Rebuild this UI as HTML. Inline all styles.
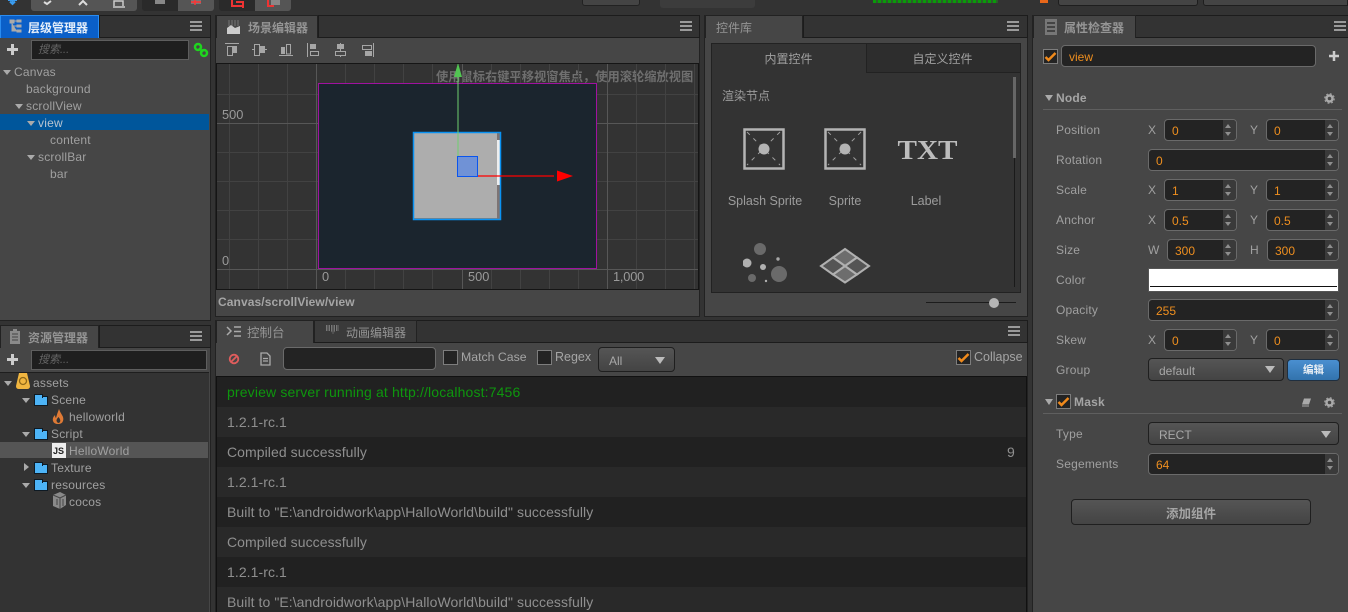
<!DOCTYPE html>
<html><head><meta charset="utf-8">
<style>
html,body{margin:0;padding:0;width:1348px;height:612px;overflow:hidden;background:#333;}
body{position:relative;font-family:"Liberation Sans","Noto Sans CJK SC",sans-serif;font-size:12px;color:#a0a0a0;}
div,span,svg{position:absolute;box-sizing:border-box;}
.panel{background:#464646;border:1px solid #222;}
.tabbar{background:#333;border:1px solid #1c1c1c;}
.tab{background:#464646;border:1px solid #222;border-bottom:0;height:23px;color:#959595;font-size:12px;font-weight:bold;line-height:24px;white-space:nowrap;}
.t{white-space:nowrap;line-height:17px;height:17px;letter-spacing:.2px;margin-top:1px;}
.menu{width:12px;height:10px;border-top:2px solid #9a9a9a;border-bottom:2px solid #9a9a9a;}
.menu:after{content:"";position:absolute;left:0;right:0;top:2px;height:2px;background:#9a9a9a;}
.plus{width:13px;height:13px;}
.search{background:#1f1f1f;border:1px solid #5e5e5e;color:#666;font-style:italic;font-size:11px;line-height:18px;padding-left:6px;white-space:nowrap;}
.arr{width:0;height:0;border-left:4px solid transparent;border-right:4px solid transparent;border-top:5px solid #aaa;}
.folder{width:14px;height:10px;background:#4db4f7;border:1px solid #0e1a24;}
.folder:before{content:"";position:absolute;left:-1px;top:-3px;width:7px;height:3px;background:#4db4f7;border:1px solid #0e1a24;border-bottom:0;}
.lab{color:#a0a0a0;font-size:12px;line-height:16px;height:16px;white-space:nowrap;letter-spacing:.2px;margin-top:1px;}
.num{height:22px;background:#232323;border:1px solid #6a6a6a;border-radius:4px;color:#ef8f1f;font-size:12px;line-height:23px;padding-left:7px;overflow:hidden;}
.num b{position:absolute;right:0;top:0;bottom:0;width:13px;background:#3a3a3a;border-left:1px solid #222;}
.num b:before{content:"";position:absolute;left:2px;top:4px;border-left:3.5px solid transparent;border-right:3.5px solid transparent;border-bottom:4px solid #8e8e8e;}
.num b:after{content:"";position:absolute;left:2px;bottom:4px;border-left:3.5px solid transparent;border-right:3.5px solid transparent;border-top:4px solid #8e8e8e;}
.sel{height:23px;background:linear-gradient(#555,#444);border:1px solid #1f1f1f;border-radius:4px;color:#a8a8a8;font-size:12px;line-height:24px;padding-left:10px;}
.sel i{position:absolute;right:6px;top:7px;border-left:5px solid transparent;border-right:5px solid transparent;border-top:7px solid #bbb;}
.chk{width:15px;height:15px;background:#232323;border:1px solid #7d7d7d;}
.row{left:2px;width:809px;height:30px;line-height:30px;padding-left:10px;font-size:14px;letter-spacing:.07px;color:#8f8f8f;white-space:nowrap;}
.grp{color:#a5a5a5;font-weight:bold;font-size:12px;}
.cap{color:#9c9c9c;font-size:12.5px;text-align:center;white-space:nowrap;line-height:16px;}
</style></head>
<body>
<!-- top strip -->
<div style="left:31px;top:0;width:106px;height:11px;background:#555;border-radius:0 0 3px 3px"></div>
<div style="left:142px;top:0;width:36px;height:11px;background:#2a2a2a;border-radius:0 0 0 3px"></div>
<div style="left:178px;top:0;width:36px;height:11px;background:#555;border-radius:0 0 3px 0"></div>
<div style="left:219px;top:0;width:36px;height:11px;background:#2a2a2a;border-radius:0 0 0 3px"></div>
<div style="left:255px;top:0;width:36px;height:11px;background:#555;border-radius:0 0 3px 0"></div>
<svg style="left:0;top:0" width="300" height="11">
<path d="M8 0h9M12.500 0v4M10 1.500l2.500 2.500 2.500-2.500" stroke="#3a9cf0" stroke-width="2" fill="none"/>
<path d="M44 2l3 2 4-3" stroke="#ddd" stroke-width="2" fill="none"/>
<path d="M79 5l4-4 4 4" stroke="#ddd" stroke-width="2" fill="none"/>
<path d="M114 6V1h9v5M113 7h12" stroke="#ccc" stroke-width="1.500" fill="none"/>
<path d="M155 0h10v4h-10z" fill="#888"/>
<path d="M191 0h10v4h-10z" fill="#777"/><path d="M195 0v5M191 2h10" stroke="#f33" stroke-width="1.500"/>
<path d="M232 0v6h10M236 2h7v6" stroke="#e33" stroke-width="2" fill="none"/>
<path d="M268 0v6h6" stroke="#e33" stroke-width="2" fill="none"/><path d="M271 0h9v5h-9z" fill="#888"/>
</svg>
<div style="left:582px;top:0;width:58px;height:6px;background:#444;border:1px solid #222;border-top:0;border-radius:0 0 3px 3px"></div>
<div style="left:660px;top:0;width:95px;height:8px;background:#3c3c3c;border-radius:0 0 3px 3px"></div>
<div style="left:873px;top:0;width:125px;height:3px;background:repeating-linear-gradient(90deg,#0a9a0a 0 3px,#2c5a2c 3px 5px)"></div>
<div style="left:1040px;top:0;width:8px;height:3px;background:#e8671a"></div>
<div style="left:1058px;top:0;width:140px;height:6px;background:#444;border:1px solid #1e1e1e;border-top:0;border-radius:0 0 3px 3px"></div>
<div style="left:1203px;top:0;width:145px;height:6px;background:#444;border:1px solid #1e1e1e;border-top:0;border-radius:0 0 0 3px"></div>

<!-- hierarchy panel -->
<div class="panel" style="left:-1px;top:15px;width:212px;height:306px"></div>
<div class="tabbar" style="left:99px;top:15px;width:112px;height:23px"></div>
<div class="tab" style="left:0;top:15px;width:99px;background:#0a5fc8;border-color:#2a8cf0;color:#e4eefa;padding-left:27px">层级管理器</div>
<svg style="left:9px;top:19px" width="13" height="15"><path d="M1 1h4v3h-4zM8 1h4v2h-4zM8 6h4v2h-4zM8 11h4v2h-4zM3 4v8h5M3 7h5M5 2h3" fill="#aaa" stroke="#aaa" stroke-width="1"/></svg>
<div class="menu" style="left:190px;top:21px"></div>
<svg class="plus" style="left:6px;top:43px"><path d="M6.500 1v11M1 6.500h11" stroke="#ccc" stroke-width="3"/></svg>
<div class="search" style="left:31px;top:40px;width:158px;height:20px">搜索...</div>
<svg style="left:193px;top:42px" width="16" height="16"><circle cx="5" cy="5" r="3" fill="none" stroke="#1fd51f" stroke-width="2.500"/><circle cx="11" cy="11" r="3" fill="none" stroke="#1fd51f" stroke-width="2.500"/><path d="M6 6l4 4" stroke="#1fd51f" stroke-width="2"/></svg>
<div style="left:0;top:114px;width:209px;height:16px;background:#00569b"></div>
<div class="arr" style="left:3px;top:70px"></div><div class="t" style="left:14px;top:63px">Canvas</div>
<div class="t" style="left:26px;top:80px">background</div>
<div class="arr" style="left:15px;top:104px"></div><div class="t" style="left:26px;top:97px">scrollView</div>
<div class="arr" style="left:27px;top:121px"></div><div class="t" style="left:38px;top:114px;color:#b8c4d0">view</div>
<div class="t" style="left:50px;top:131px">content</div>
<div class="arr" style="left:27px;top:155px"></div><div class="t" style="left:38px;top:148px">scrollBar</div>
<div class="t" style="left:50px;top:165px">bar</div>

<!-- assets panel -->
<div class="panel" style="left:-1px;top:325px;width:212px;height:290px"></div>
<div class="tabbar" style="left:99px;top:325px;width:112px;height:23px"></div>
<div class="tab" style="left:0;top:325px;width:99px;padding-left:27px">资源管理器</div>
<svg style="left:9px;top:329px" width="12" height="16"><path d="M1 2h10v13h-10zM4 0h4v2h-4z" fill="#8a8a8a"/><path d="M3 5h6M3 8h6M3 11h6" stroke="#444"/></svg>
<div class="menu" style="left:190px;top:331px"></div>
<svg class="plus" style="left:6px;top:353px"><path d="M6.500 1v11M1 6.500h11" stroke="#ccc" stroke-width="3"/></svg>
<div class="search" style="left:31px;top:350px;width:176px;height:20px">搜索...</div>
<div style="left:0;top:372px;width:209px;height:240px;background:#333;border-top:1px solid #1e1e1e"></div>
<div style="left:0;top:442px;width:208px;height:16px;background:#555"></div>
<div class="arr" style="left:4px;top:381px"></div>
<svg style="left:16px;top:372px" width="14" height="18"><path d="M3 1h8l3 13q0 3-3 3h-8q-3 0-3-3z" fill="#f1b640"/><circle cx="7" cy="9" r="3.500" fill="none" stroke="#8f6818" stroke-width="1.300"/></svg>
<div class="t" style="left:33px;top:374px">assets</div>
<div class="arr" style="left:22px;top:398px"></div><div class="folder" style="left:34px;top:396px"></div><div class="t" style="left:51px;top:391px">Scene</div>
<svg style="left:52px;top:408px" width="13" height="17"><path d="M7 1q1 3 3 6t1 6q-1 3-5 3t-5-3q-1-3 2-6q0 2 1 3q1-4 3-9zM6.500 9q-3 3-1.500 5t3 0q1-2-1.500-5z" fill="#df7a35"/></svg>
<div class="t" style="left:69px;top:408px">helloworld</div>
<div class="arr" style="left:22px;top:432px"></div><div class="folder" style="left:34px;top:430px"></div><div class="t" style="left:51px;top:425px">Script</div>
<div style="left:52px;top:443px;width:14px;height:15px;background:#eee;color:#222;font-size:9px;font-weight:bold;line-height:17px;padding-left:1px">JS</div>
<div class="t" style="left:69px;top:442px">HelloWorld</div>
<div style="left:24px;top:463px;border-top:4px solid transparent;border-bottom:4px solid transparent;border-left:5px solid #aaa"></div>
<div class="folder" style="left:34px;top:464px"></div><div class="t" style="left:51px;top:459px">Texture</div>
<div class="arr" style="left:22px;top:483px"></div><div class="folder" style="left:34px;top:481px"></div><div class="t" style="left:51px;top:476px">resources</div>
<svg style="left:52px;top:492px" width="15" height="17"><path d="M1 3l7-3 6 3v10l-6 4-7-3z" fill="#8a8a8a"/><path d="M8 6v11M1 3l7 3 6-3M5 7v6M11 7v7" stroke="#444" fill="none"/></svg>
<div class="t" style="left:69px;top:493px">cocos</div>

<!-- scene panel -->
<div class="panel" style="left:215px;top:15px;width:485px;height:302px"></div>
<div class="tabbar" style="left:318px;top:15px;width:382px;height:23px"></div>
<div class="tab" style="left:216px;top:15px;width:102px;padding-left:31px">场景编辑器</div>
<svg style="left:227px;top:19px" width="14" height="15"><path d="M0 15V9l4-3 4 3 5-2v8z" fill="#ccc"/><path d="M1 2h12M1 4h12M1 6h12" stroke="#777" stroke-dasharray="2 1"/></svg>
<div class="menu" style="left:680px;top:21px"></div>
<svg style="left:224px;top:42px" width="156" height="18" fill="none" stroke="#a6a6a6">
<path d="M1 1.500h14M3.500 4.500h5v9h-5z"/><path d="M9 4h4v7h-4z" fill="#a6a6a6" stroke="none"/>
<path d="M28 7.500h3M30.500 2.500h5v11h-5zM41 7.500h2"/><path d="M36 4h5v7h-5z" fill="#a6a6a6" stroke="none"/>
<path d="M55 13.500h14"/><path d="M57 5h4v7h-4z" fill="#a6a6a6" stroke="none"/><path d="M62.500 2.500h4v9.500h-4z"/>
<path d="M83.500 1v14"/><path d="M86 2h6v5h-6z" fill="#a6a6a6" stroke="none"/><path d="M86.500 9.500h8v4h-8z"/>
<path d="M116.500 1v14"/><path d="M113 2h7v5h-7z" fill="#a6a6a6" stroke="none"/><path d="M111.500 9.500h10v4h-10z" fill="#464646"/>
<path d="M149.500 1v14M138.500 3.500h9v4h-9z"/><path d="M141 9h7v5h-7z" fill="#a6a6a6" stroke="none"/>
</svg>
<div style="left:216px;top:63px;width:483px;height:227px;background:#333;border:1px solid #151515;overflow:hidden">
<div style="left:219px;top:3px;font-size:12.25px;font-weight:bold;color:#6f6f6f;white-space:nowrap">使用鼠标右键平移视窗焦点，使用滚轮缩放视图</div>
<svg style="left:-1px;top:-1px" width="483" height="227">
<g stroke="#424242" stroke-width="1">
<path d="M13.500 0v227M42.500 0v227M71.500 0v227M129.500 0v227M158.500 0v227M187.500 0v227M216.500 0v227M275.500 0v227M304.500 0v227M333.500 0v227M362.500 0v227M420.500 0v227M449.500 0v227M478.500 0v227"/>
<path d="M0 31.500h483M0 89.500h483M0 118.500h483M0 147.500h483M0 176.500h483"/>
</g>
<g stroke="#575757" stroke-width="1"><path d="M100.500 0v227M246.500 0v227M391.500 0v227M0 60.500h483M0 206.500h483"/></g>
<rect x="102.500" y="20.500" width="278" height="185" fill="#1b252e" stroke="#a012a0"/>
<rect x="198" y="69.500" width="86" height="86" fill="#adadad"/>
<rect x="281" y="70" width="3" height="86" fill="#7d7474"/>
<rect x="281" y="77" width="3" height="45" fill="#eee"/>
<rect x="197.500" y="69.500" width="87" height="87" fill="none" stroke="#0a92f2" stroke-width="1.500"/>
<path d="M242 0v96" stroke="#6fd06f" stroke-width="1"/>
<path d="M242 0l-4 14h8z" fill="#52c552"/>
<rect x="241.500" y="93.500" width="20" height="20" fill="#7092d6" stroke="#0a55ee" stroke-width="1"/>
<path d="M262 113h76" stroke="#f00" stroke-width="1.300"/>
<path d="M357 113l-16-5.500v11z" fill="#f00"/>
</svg>
<div style="left:5px;top:43px;font-size:12.800px;color:#9a9a9a">500</div>
<div style="left:5px;top:189px;font-size:12.800px;color:#9a9a9a">0</div>
<div style="left:105px;top:205px;font-size:12.800px;color:#9a9a9a">0</div>
<div style="left:251px;top:205px;font-size:12.800px;color:#9a9a9a">500</div>
<div style="left:396px;top:205px;font-size:12.800px;letter-spacing:-.2px;color:#9a9a9a">1,000</div>
</div>
<div style="left:218px;top:295px;font-size:12px;font-weight:bold;color:#a5a5a5;letter-spacing:.1px">Canvas/scrollView/view</div>

<!-- library panel -->
<div class="panel" style="left:704px;top:15px;width:324px;height:302px"></div>
<div class="tabbar" style="left:803px;top:15px;width:225px;height:23px"></div>
<div class="tab" style="left:705px;top:15px;width:98px;padding-left:10px;font-weight:normal">控件库</div>
<div class="menu" style="left:1007px;top:21px"></div>
<div style="left:711px;top:43px;width:310px;height:250px;background:#333;border:1px solid #222"></div>
<div style="left:866px;top:43px;width:155px;height:30px;background:#2d2d2d;border:1px solid #222;color:#a0a0a0;font-size:12px;line-height:31px;text-align:center;padding-right:2px">自定义控件</div>
<div style="left:711px;top:42px;width:155px;height:31px;color:#a0a0a0;font-size:12px;line-height:34px;text-align:center">内置控件</div>
<div style="left:722px;top:87px;font-size:12px;color:#9c9c9c">渲染节点</div>
<div style="left:1014px;top:77px;width:1px;height:210px;background:#1a1a1a"></div>
<div style="left:1013px;top:77px;width:3px;height:81px;background:#666"></div>
<svg style="left:743px;top:128px" width="230" height="156">
<g><rect x="1.500" y="1.500" width="39" height="39" fill="none" stroke="#b4b4b4" stroke-width="2.500"/><path d="M4 4l33 33M37 4l-33 33" stroke="#a0a0a0" stroke-dasharray="4 5"/><circle cx="21" cy="21" r="5.500" fill="#b4b4b4"/></g>
<g transform="translate(81 0)"><rect x="1.500" y="1.500" width="39" height="39" fill="none" stroke="#b4b4b4" stroke-width="2.500"/><path d="M4 4l33 33M37 4l-33 33" stroke="#a0a0a0" stroke-dasharray="4 5"/><circle cx="21" cy="21" r="5.500" fill="#b4b4b4"/></g>
<text x="184.500" y="31" text-anchor="middle" font-family="Liberation Serif" font-weight="bold" font-size="27" fill="#bdbdbd" textLength="60" lengthAdjust="spacingAndGlyphs">TXT</text>
<circle cx="17" cy="121" r="6" fill="#6a6a6a"/><circle cx="4" cy="135" r="4.500" fill="#b0b0b0"/><circle cx="20" cy="139" r="3" fill="#b0b0b0"/><circle cx="35" cy="131" r="1.700" fill="#a8a8a8"/><circle cx="36" cy="146" r="8" fill="#6a6a6a"/><circle cx="9" cy="150" r="4" fill="#6a6a6a"/><circle cx="23" cy="153" r="1.200" fill="#b0b0b0"/>
<g stroke="#b0b0b0" stroke-width="2" stroke-linejoin="miter">
<path d="M102 121l12 8.500-12 8.500-12-8.500z" fill="#6d6d6d"/>
<path d="M102 138l12 8.500-12 8-12-8z" fill="#6d6d6d"/>
<path d="M90 129.500l12 8.500-12 8.500-12-8.500z" fill="#555"/>
<path d="M114 129.500l12 8.500-12 8.500-12-8.500z" fill="#555"/>
</g>
</svg>
<div class="cap" style="left:715px;top:193px;width:100px">Splash Sprite</div>
<div class="cap" style="left:805px;top:193px;width:80px">Sprite</div>
<div class="cap" style="left:886px;top:193px;width:80px">Label</div>
<div style="left:926px;top:302px;width:90px;height:1px;background:#1c1c1c"></div>
<div style="left:989px;top:298px;width:10px;height:10px;border-radius:50%;background:#b5b5b5"></div>

<!-- console -->
<div class="panel" style="left:215px;top:320px;width:813px;height:295px"></div>
<div class="tabbar" style="left:313px;top:320px;width:715px;height:23px"></div>
<div class="tab" style="left:216px;top:320px;width:98px;height:23px;padding-left:30px;font-weight:normal;font-size:12.500px">控制台</div>
<div class="tab" style="left:314px;top:320px;width:103px;background:#3a3a3a;padding-left:31px;font-weight:normal;height:22px">动画编辑器</div>
<svg style="left:226px;top:326px" width="16" height="12" fill="none" stroke="#aaa" stroke-width="1.500"><path d="M1 1l4 4-4 4M8 1h7M8 5.500h7M8 10h7"/></svg>
<svg style="left:325px;top:325px" width="16" height="12"><path d="M1 0h13v6h-4l-2 3-2-3h-5z" fill="#777"/><path d="M3 0v6M5.500 0v6M8 0v8M10.500 0v6M13 0v6" stroke="#333"/></svg>
<div class="menu" style="left:1008px;top:326px"></div>
<svg style="left:227px;top:352px" width="14" height="14" fill="none" stroke="#e05d5d" stroke-width="1.800"><circle cx="7" cy="7" r="4.300"/><path d="M4 10l6-6"/></svg>
<svg style="left:259px;top:352px" width="13" height="14" fill="none" stroke="#aaa" stroke-width="1.300"><path d="M2 1h6l3 3v9h-9zM4 6.500h5M4 9h5"/></svg>
<div style="left:283px;top:347px;width:153px;height:23px;background:#232323;border:1px solid #6a6a6a;border-radius:4px"></div>
<div class="chk" style="left:443px;top:350px"></div>
<div class="t" style="left:461px;top:348px;font-size:12.300px;letter-spacing:0;color:#a5a5a5">Match Case</div>
<div class="chk" style="left:537px;top:350px"></div>
<div class="t" style="left:555px;top:348px;font-size:12.500px;letter-spacing:0;color:#a5a5a5">Regex</div>
<div class="sel" style="left:598px;top:347px;width:77px;height:25px;line-height:26px">All<i style="top:9px;right:9px"></i></div>
<div class="chk" style="left:956px;top:350px"></div>
<svg style="left:957px;top:352px" width="14" height="12"><path d="M1.500 6l3 3 7-7" fill="none" stroke="#f08a1c" stroke-width="2.500"/></svg>
<div class="t" style="left:974px;top:348px;font-size:12.500px;letter-spacing:0;color:#a5a5a5">Collapse</div>
<div style="left:216px;top:376px;width:811px;height:236px;background:#222;border:1px solid #111;border-bottom:0;overflow:hidden">
<div class="row" style="left:0;top:0;background:#212121;color:#0e960e;letter-spacing:.15px">preview server running at http://localhost:7456</div>
<div class="row" style="left:0;top:30px;background:#292929">1.2.1-rc.1</div>
<div class="row" style="left:0;top:60px;background:#212121">Compiled successfully<span style="left:790px;top:0">9</span></div>
<div class="row" style="left:0;top:90px;background:#292929">1.2.1-rc.1</div>
<div class="row" style="left:0;top:120px;background:#212121">Built to "E:\androidwork\app\HalloWorld\build" successfully</div>
<div class="row" style="left:0;top:150px;background:#292929">Compiled successfully</div>
<div class="row" style="left:0;top:180px;background:#212121">1.2.1-rc.1</div>
<div class="row" style="left:0;top:210px;background:#292929">Built to "E:\androidwork\app\HalloWorld\build" successfully</div>
</div>

<!-- inspector -->
<div class="panel" style="left:1032px;top:15px;width:320px;height:600px"></div>
<div class="tabbar" style="left:1135px;top:15px;width:215px;height:23px"></div>
<div class="tab" style="left:1033px;top:15px;width:103px;padding-left:30px">属性检查器</div>
<svg style="left:1045px;top:19px" width="12" height="16"><path d="M0 0h12v16h-12z" fill="#777"/><path d="M2 4h8M2 8h8M2 12h8" stroke="#333" stroke-width="1.500"/></svg>
<div class="menu" style="left:1334px;top:21px"></div>
<div class="chk" style="left:1043px;top:49px"></div>
<svg style="left:1044px;top:51px" width="14" height="12"><path d="M1.500 6l3 3 7-7" fill="none" stroke="#f08a1c" stroke-width="2.500"/></svg>
<div class="num" style="left:1061px;top:45px;width:255px;height:22px;padding-left:7px">view</div>
<svg class="plus" style="left:1328px;top:50px"><path d="M6 1v10M1 6h10" stroke="#ccc" stroke-width="2.500"/></svg>
<div style="left:1045px;top:95px;border-left:4px solid transparent;border-right:4px solid transparent;border-top:6px solid #aaa"></div>
<div class="grp t" style="left:1056px;top:89px">Node</div>
<svg style="left:1324px;top:93px" width="11" height="11"><circle cx="5.500" cy="5.500" r="3" fill="none" stroke="#aaa" stroke-width="2.500"/><circle cx="5.500" cy="5.500" r="4.800" fill="none" stroke="#aaa" stroke-dasharray="2 1.800"/></svg>
<div style="left:1043px;top:109px;width:299px;height:1px;background:#5f5f5f"></div>

<div class="lab" style="left:1056px;top:121px">Position</div>
<div class="lab" style="left:1148px;top:121px">X</div><div class="num" style="left:1164px;top:119px;width:73px">0<b></b></div>
<div class="lab" style="left:1250px;top:121px">Y</div><div class="num" style="left:1266px;top:119px;width:73px">0<b></b></div>
<div class="lab" style="left:1056px;top:151px">Rotation</div>
<div class="num" style="left:1148px;top:149px;width:191px">0<b></b></div>
<div class="lab" style="left:1056px;top:181px">Scale</div>
<div class="lab" style="left:1148px;top:181px">X</div><div class="num" style="left:1164px;top:179px;width:73px">1<b></b></div>
<div class="lab" style="left:1250px;top:181px">Y</div><div class="num" style="left:1266px;top:179px;width:73px">1<b></b></div>
<div class="lab" style="left:1056px;top:211px">Anchor</div>
<div class="lab" style="left:1148px;top:211px">X</div><div class="num" style="left:1164px;top:209px;width:73px">0.5<b></b></div>
<div class="lab" style="left:1250px;top:211px">Y</div><div class="num" style="left:1266px;top:209px;width:73px">0.5<b></b></div>
<div class="lab" style="left:1056px;top:241px">Size</div>
<div class="lab" style="left:1148px;top:241px">W</div><div class="num" style="left:1167px;top:239px;width:70px">300<b></b></div>
<div class="lab" style="left:1250px;top:241px">H</div><div class="num" style="left:1267px;top:239px;width:72px">300<b></b></div>
<div class="lab" style="left:1056px;top:271px">Color</div>
<div style="left:1148px;top:268px;width:191px;height:24px;background:#fff;border:1px solid #555"><div style="left:1px;right:1px;top:17px;height:1px;background:#111"></div></div>
<div class="lab" style="left:1056px;top:301px">Opacity</div>
<div class="num" style="left:1148px;top:299px;width:191px">255<b></b></div>
<div class="lab" style="left:1056px;top:331px">Skew</div>
<div class="lab" style="left:1148px;top:331px">X</div><div class="num" style="left:1164px;top:329px;width:73px">0<b></b></div>
<div class="lab" style="left:1250px;top:331px">Y</div><div class="num" style="left:1266px;top:329px;width:73px">0<b></b></div>
<div class="lab" style="left:1056px;top:361px">Group</div>
<div class="sel" style="left:1148px;top:358px;width:136px">default</div>
<div style="left:1265px;top:366px;border-left:5px solid transparent;border-right:5px solid transparent;border-top:7px solid #bbb"></div>
<div style="left:1287px;top:359px;width:53px;height:22px;background:linear-gradient(#4a8fd0,#3273ad);border:1px solid #1f2f40;border-radius:4px;color:#e8eef4;font-size:10.500px;font-weight:bold;text-align:center;line-height:21px">编辑</div>
<div style="left:1045px;top:399px;border-left:4px solid transparent;border-right:4px solid transparent;border-top:6px solid #aaa"></div>
<div class="chk" style="left:1056px;top:394px"></div>
<svg style="left:1057px;top:396px" width="14" height="12"><path d="M1.500 6l3 3 7-7" fill="none" stroke="#f08a1c" stroke-width="2.500"/></svg>
<div class="grp t" style="left:1074px;top:393px">Mask</div>
<svg style="left:1301px;top:398px" width="11" height="10"><path d="M3 0.500h7l-2 6h-7z" fill="#aaa"/><path d="M1 8h7" stroke="#aaa"/></svg>
<svg style="left:1324px;top:397px" width="11" height="11"><circle cx="5.500" cy="5.500" r="3" fill="none" stroke="#aaa" stroke-width="2.500"/><circle cx="5.500" cy="5.500" r="4.800" fill="none" stroke="#aaa" stroke-dasharray="2 1.800"/></svg>
<div style="left:1043px;top:413px;width:299px;height:1px;background:#5f5f5f"></div>
<div class="lab" style="left:1056px;top:425px">Type</div>
<div class="sel" style="left:1148px;top:422px;width:191px">RECT<i style="right:7px;top:8px"></i></div>
<div class="lab" style="left:1056px;top:455px">Segements</div>
<div class="num" style="left:1148px;top:453px;width:191px">64<b></b></div>
<div class="sel" style="left:1071px;top:499px;width:240px;height:26px;padding:0;text-align:center;font-weight:bold;font-size:12.500px;line-height:28px;color:#a5a5a5">添加组件</div>
</body></html>
